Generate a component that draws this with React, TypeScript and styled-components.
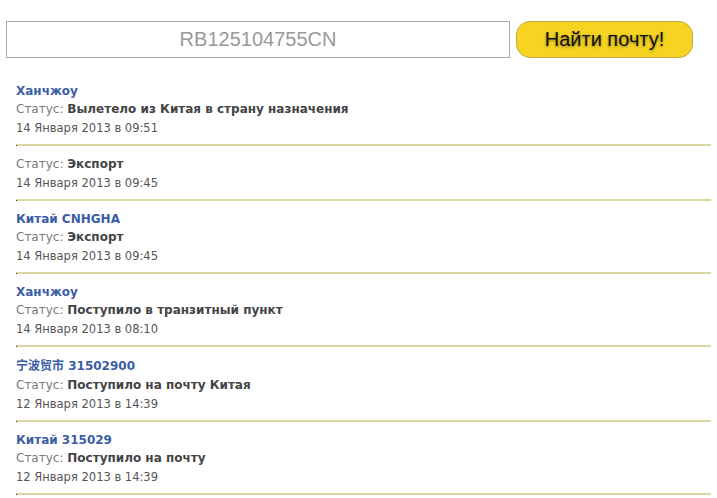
import React from "react";
import styled, { createGlobalStyle } from "styled-components";

const Global = createGlobalStyle`
  html, body { margin: 0; padding: 0; background: #fff; }
  body { font-family: "DejaVu Sans", Verdana, sans-serif; }
`;

const Page = styled.div`
  padding: 21px 0 0 6px;
`;

const SearchBar = styled.form`
  display: flex;
  gap: 6px;
  align-items: stretch;
`;

const Input = styled.input`
  box-sizing: border-box;
  width: 504px;
  height: 37px;
  border: 1px solid #aaa;
  font-family: "Liberation Sans", Arial, sans-serif;
  font-size: 20px;
  color: #999;
  text-align: center;
  outline: none;
  padding: 0;
  &::placeholder { color: #999; }
`;

const Button = styled.button`
  box-sizing: border-box;
  width: 177px;
  height: 37px;
  border: 1px solid #c4aa48;
  border-radius: 14px;
  background: #f7d422;
  font-family: "Liberation Sans", Arial, sans-serif;
  font-size: 20px;
  color: #111;
  text-shadow: 0 1px 3px rgba(0, 0, 0, 0.45);
  padding: 0;
  cursor: pointer;
`;

const List = styled.ul`
  list-style: none;
  margin: 15px 6px 0 10px;
  padding: 0;
`;

const Item = styled.li`
  position: relative;
  padding: 9px 0 7px 0;
  border-bottom: 2px solid #dcd6a2;
  font-size: 12px;
  &::after {
    content: "";
    position: absolute;
    left: 0;
    bottom: -2px;
    width: 1px;
    height: 1px;
    background: #333;
  }
`;

const Place = styled.div<{ $tall?: boolean }>`
  font-weight: bold;
  color: #3b5da6;
  line-height: ${(p) => (p.$tall ? "20px" : "18px")};
  font-family: "DejaVu Sans", "Noto Sans CJK SC", Verdana, sans-serif;
`;

const Status = styled.div`
  color: #7a7a7a;
  line-height: 19px;
  b { color: #444; }
`;

const DateLine = styled.div`
  color: #555;
  font-size: 11.5px;
  line-height: 18px;
`;

type Ev = { place?: string; status: string; date: string; cjk?: boolean };

const events: Ev[] = [
  { place: "Ханчжоу", status: "Вылетело из Китая в страну назначения", date: "14 Января 2013 в 09:51" },
  { status: "Экспорт", date: "14 Января 2013 в 09:45" },
  { place: "Китай CNHGHA", status: "Экспорт", date: "14 Января 2013 в 09:45" },
  { place: "Ханчжоу", status: "Поступило в транзитный пункт", date: "14 Января 2013 в 08:10" },
  { place: "宁波贸市 31502900", status: "Поступило на почту Китая", date: "12 Января 2013 в 14:39", cjk: true },
  { place: "Китай 315029", status: "Поступило на почту", date: "12 Января 2013 в 14:39" },
];

export default function App() {
  return (
    <>
      <Global />
      <Page>
        <SearchBar onSubmit={(e) => e.preventDefault()}>
          <Input defaultValue="RB125104755CN" />
          <Button type="submit">Найти почту!</Button>
        </SearchBar>
        <List>
          {events.map((ev, i) => (
            <Item key={i}>
              {ev.place && <Place $tall={ev.cjk}>{ev.place}</Place>}
              <Status>
                Статус: <b>{ev.status}</b>
              </Status>
              <DateLine>{ev.date}</DateLine>
            </Item>
          ))}
        </List>
      </Page>
    </>
  );
}
